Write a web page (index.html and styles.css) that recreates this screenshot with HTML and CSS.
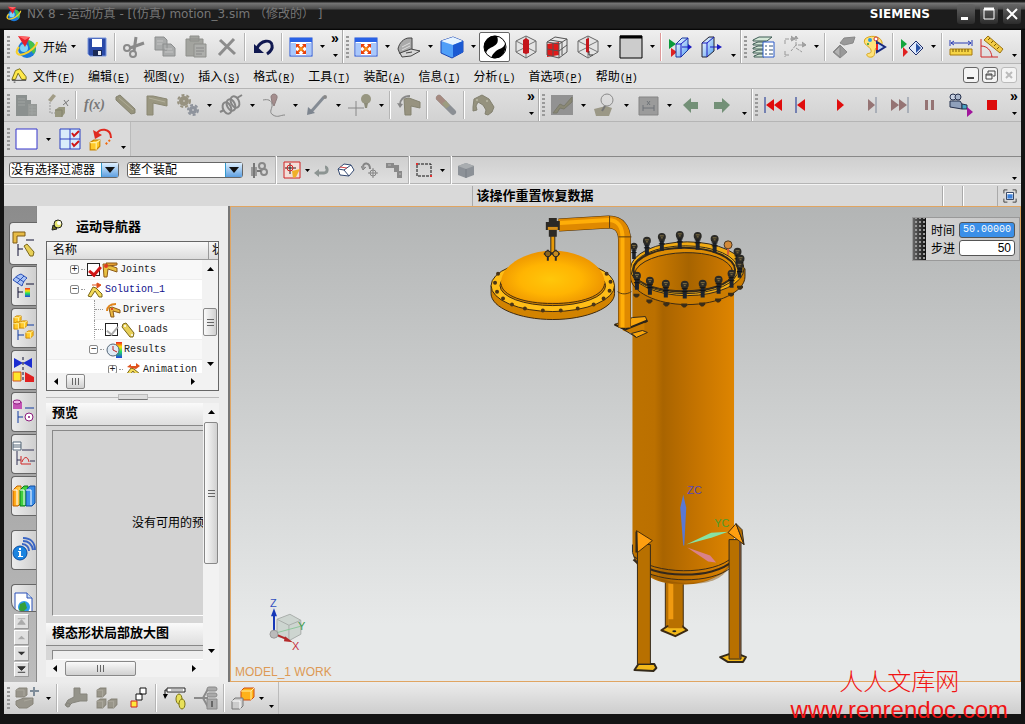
FILE: index.html
```html
<!DOCTYPE html>
<html lang="zh-CN">
<head>
    <meta charset="UTF-8">
    <meta name="viewport" content="width=device-width, initial-scale=1.0">
    <title>NX 8 - 运动仿真</title>
    <link rel="stylesheet" href="styles.css">
</head>
<body>
    <!-- Shared icon shapes -->
    <svg class="defs" width="0" height="0">
        <defs>
            <linearGradient id="pageBlue" x1="0" y1="0" x2="1" y2="1"><stop offset="0" stop-color="#fff"/><stop offset="1" stop-color="#4f9bf0"/></linearGradient>
            <linearGradient id="body" x1="0" x2="1" y1="0" y2="0"><stop offset="0" stop-color="#bd7200"/><stop offset=".22" stop-color="#bb7000"/><stop offset=".3" stop-color="#a96400"/><stop offset=".6" stop-color="#c27200"/><stop offset="1" stop-color="#de8500"/></linearGradient>
            <linearGradient id="inner" x1="0" x2="1" y1="0" y2="0"><stop offset="0" stop-color="#df8700"/><stop offset=".55" stop-color="#a76400"/><stop offset="1" stop-color="#d17b00"/></linearGradient>
            <radialGradient id="dome" cx=".48" cy=".55" r=".6"><stop offset="0" stop-color="#ffc70a"/><stop offset=".5" stop-color="#ffb402"/><stop offset="1" stop-color="#e88c00"/></radialGradient>
            <linearGradient id="rainbow" x1="0" y1="0" x2="0" y2="1"><stop offset="0" stop-color="#e22"/><stop offset=".3" stop-color="#fd0"/><stop offset=".6" stop-color="#2d6"/><stop offset="1" stop-color="#24d"/></linearGradient>
            <linearGradient id="book1" x1="0" x2="1"><stop offset="0" stop-color="#f90"/><stop offset="1" stop-color="#fd6"/></linearGradient>
        </defs>
        <symbol id="nx" viewBox="0 0 24 24">
            <circle cx="12" cy="14" r="9" fill="#1b79d8"/><path d="M13 5a9 9 0 0 1 6 14c-3-2-5-7-6-14z" fill="#45c24b"/><circle cx="9" cy="13" r="4" fill="#7fd4f7"/>
            <path d="M4 12c-5 6-1 9 5 7s13-8 13-12" fill="none" stroke="#f5cf2c" stroke-width="2"/>
            <path d="M3 1l12 1-5 10z" fill="#e5202c"/><path d="M3 1l12 1-5 3z" fill="#f66"/>
        </symbol>
        <symbol id="fit" viewBox="0 0 24 24">
            <rect x="1" y="3" width="22" height="18" fill="#fff" stroke="#1d50d8"/><rect x="1" y="3" width="22" height="4" fill="#2a62e6"/><path d="M2 8h5v12H2zM17 8h5v12h-5z" fill="#a9c8fb"/>
            <path d="M8 10l8 8M16 10l-8 8" stroke="#ee5a0c" stroke-width="2"/><path d="M7 9h4l-4 4zM17 9h-4l4 4zM7 19h4l-4-4zM17 19h-4l4-4z" fill="#e83c0c"/><circle cx="12" cy="14" r="2" fill="#f7931e"/>
        </symbol>
        <symbol id="wirecube" viewBox="0 0 24 24">
            <path d="M12 1l10 5v11l-10 6-10-6V6z" fill="#e4e4e4" stroke="#666"/><path d="M2 6l10 5 10-5M12 11v12M12 1v10M2 17l10-5 10 5" fill="none" stroke="#777"/>
        </symbol>
        <symbol id="ogcube" viewBox="0 0 10 10"><path d="M1 3l3-2h5v5l-3 3H1z" fill="#ffc928" stroke="#c98500"/><path d="M1 3h5v6M6 3l3-2" fill="none" stroke="#fff0a0"/></symbol>
        <symbol id="graycube" viewBox="0 0 10 10"><path d="M1 3l3-2h5v5l-3 3H1z" fill="#99968a" stroke="#88857a"/><path d="M1 3h5v6" fill="none" stroke="#aaa79c"/></symbol>
        <symbol id="link" viewBox="0 0 16 16"><path d="M3 2l3-1 8 10-1 4h-3L2 5z" fill="#e7cf57" stroke="#7a671b"/><circle cx="5" cy="4" r="1" fill="#fff"/><circle cx="12" cy="13" r="1" fill="#fff"/></symbol>
        <symbol id="joint" viewBox="0 0 16 16"><path d="M1 2h3l11 4v4L6 7l-1 8H2z" fill="#e9c040" stroke="#8d5a18"/><path d="M4 1h11v2L6 4z" fill="#e9a030" stroke="#8d5a18"/><circle cx="4" cy="4" r="2" fill="#e13a1f"/></symbol>
        <symbol id="arrowdown" viewBox="0 0 5 3"><path d="M0 0h5L2.500 3z"/></symbol>
        <symbol id="bolt" viewBox="0 0 10 20"><path d="M3 9h4v10H3z" fill="#1d232c"/><circle cx="5" cy="5" r="4" fill="#2b2a26"/><path d="M3 4h4M4 6h2" stroke="#8a7746"/><path d="M2 9h6M2 12h6" stroke="#111"/></symbol>
        <symbol id="nut" viewBox="0 0 8 6"><path d="M1 1h6v2l-2 2H3L1 3z" fill="#3a2d18"/></symbol>
    </svg>

    <div class="window">
        <header class="titlebar">
            <svg class="logo"><use href="#nx"/></svg>
            <h1>NX 8 - 运动仿真 - [(仿真) motion_3.sim （修改的） ]</h1>
            <span class="brand">SIEMENS</span>
            <button class="win-btn" aria-label="最小化"><svg viewBox="0 0 18 20"><path d="M4 13h7v3H4z" fill="#fff"/></svg></button>
            <button class="win-btn" aria-label="最大化"><svg viewBox="0 0 18 20"><path d="M4 5h10v10H4z" fill="none" stroke="#fff"/><path d="M4 5h10" stroke="#fff" stroke-width="3"/></svg></button>
            <button class="win-btn" aria-label="关闭"><svg viewBox="0 0 18 20"><path d="M4 5l10 10M14 5L4 15" stroke="#fff" stroke-width="2"/></svg></button>
        </header>

        <!-- Standard / view toolbars -->
        <div class="bar bar-main">
            <div class="group">
                <i class="grip"></i>
                <button class="start"><svg><use href="#nx"/></svg>开始<svg class="tri"><use href="#arrowdown"/></svg></button>
                <button class="tool" aria-label="保存"><svg viewBox="0 0 24 24"><path d="M3 3h18v18H5l-2-2z" fill="#2a4aa8" stroke="#7a96dc"/><path d="M7 4h10v8H7z" fill="#fff"/><path d="M8 15h9v6H8z" fill="#1b2a55"/><path d="M13 16h3v4h-3z" fill="#e8ecf4"/></svg></button>
                <i class="sep"></i>
                <button class="tool" aria-label="剪切"><svg viewBox="0 0 24 24" fill="none" stroke="#8a8a8a" stroke-width="2"><circle cx="5" cy="13" r="3"/><circle cx="11" cy="19" r="3"/><path d="M8 13l14-5M12 16l2-14" stroke-width="3"/></svg></button>
                <button class="tool" aria-label="复制"><svg viewBox="0 0 24 24" fill="#a9abab" stroke="#8c8e8e"><path d="M2 2h9l3 3v10H2zM10 9h8l4 4v8H10z"/><path d="M4 6h6M4 9h5M12 14h7M12 17h8" stroke="#c4c4c4"/></svg></button>
                <button class="tool" aria-label="粘贴"><svg viewBox="0 0 24 24" fill="#a3a49f" stroke="#8e8f8b"><path d="M2 4h17v17H2zM6 1h9v5H6z"/><path d="M10 9h12v13H10z" fill="#adaeab"/><path d="M12 13h8M12 16h8M12 19h6" stroke="#888"/></svg></button>
                <button class="tool" aria-label="删除"><svg viewBox="0 0 24 24"><path d="M5 5l15 14M19 4L4 20" stroke="#8c8c8c" stroke-width="3"/></svg></button>
                <i class="sep"></i>
                <button class="tool" aria-label="撤消"><svg viewBox="0 0 24 24"><path d="M5 13C9 5 19 4 20 10c1 4-2 7-5 9" fill="none" stroke="#101850" stroke-width="3"/><path d="M2 9v9h10z" fill="#101850"/></svg></button>
                <i class="sep"></i>
                <button class="tool" aria-label="适合窗口"><svg><use href="#fit"/></svg></button>
                <button class="drop" aria-label="更多"><svg class="tri"><use href="#arrowdown"/></svg></button>
                <button class="more" aria-label="工具条选项"><b>»</b><svg class="tri"><use href="#arrowdown"/></svg></button>
            </div>
            <div class="group">
                <i class="grip"></i>
                <button class="tool" aria-label="适合"><svg><use href="#fit"/></svg></button>
                <button class="drop" aria-label="更多"><svg class="tri"><use href="#arrowdown"/></svg></button>
                <button class="tool" aria-label="视图定向"><svg viewBox="0 0 24 24" stroke="#444"><path d="M1 14C2 8 7 3 12 3h3v12L3 19z" fill="#aaa"/><path d="M5 12l8-4M5 15l8-4" stroke="#ddd"/><path d="M3 18l11-4 9 2-9 5-9 1z" fill="#d6d6d6"/><path d="M9 18l6-1" /></svg></button>
                <button class="drop" aria-label="更多"><svg class="tri"><use href="#arrowdown"/></svg></button>
                <button class="tool" aria-label="着色"><svg viewBox="0 0 24 24"><path d="M1 6l12-4 10 4v11l-11 6-11-5z" fill="#4f9ff8" stroke="#1c46b4"/><path d="M1 6l12-4 10 4-10 4z" fill="#e6f4ff"/><path d="M13 10l10-4v11l-10 5z" fill="#1b5ad2"/></svg></button>
                <button class="drop" aria-label="更多"><svg class="tri"><use href="#arrowdown"/></svg></button>
                <button class="tool pressed" aria-label="背景"><svg viewBox="0 0 24 24"><circle cx="12" cy="12" r="11" fill="#fff" stroke="#000"/><path d="M14 1A11 11 0 0 0 3 18c2-5 5-5 8-7s5-4 3-10zM22 9c-2 5-5 4-9 7-3 3-5 5-4 7 8 2 15-5 13-14z" fill="#000"/></svg></button>
                <button class="tool" aria-label="剖切"><svg viewBox="0 0 24 24"><use href="#wirecube"/><path d="M9 5l3-2 3 2v13l-3 1-3-1z" fill="#c4161c"/></svg></button>
                <button class="tool" aria-label="剖切平面"><svg viewBox="0 0 24 24"><path d="M2 9l12-2v13l-12 2z" fill="#e01a1a"/><path d="M2 7l8-5 12 2v13l-8 6-12-3zM2 7l12 2 8-5M14 9v14M8 8v13M5 5l12 2v13M2 14l12 2 8-6" fill="none" stroke="#555"/></svg></button>
                <button class="tool" aria-label="编辑截面"><svg viewBox="0 0 24 24"><use href="#wirecube"/><path d="M10 4l3-1v15l-3-1z" fill="#c4161c"/><path d="M13 16v4h4" stroke="#333" fill="none"/></svg></button>
                <button class="drop" aria-label="更多"><svg class="tri"><use href="#arrowdown"/></svg></button>
                <button class="tool" aria-label="颜色"><svg viewBox="0 0 24 24"><path d="M1 1h22v22H1z" fill="#ccc" stroke="#000"/><path d="M1 2h22" stroke="#000" stroke-width="3"/></svg></button>
                <button class="drop" aria-label="更多"><svg class="tri"><use href="#arrowdown"/></svg></button>
                <i class="sep red"></i>
                <button class="tool" aria-label="显示"><svg viewBox="0 0 24 24"><path d="M1 4l7 5-7 5z" fill="#0a9a3a"/><path d="M3 13l6 4-6 5z" fill="#d22"/><path d="M8 9l6-6h6v12l-7 7H8z" fill="url(#pageBlue)" stroke="#1a3a9c"/><path d="M8 9h5v13M13 9l7-6M14 12h8" stroke="#1a1ac0" fill="none"/><path d="M20 9l4 3-4 3z" fill="#1a1ac0"/></svg></button>
                <button class="tool" aria-label="隐藏"><svg viewBox="0 0 24 24"><path d="M3 8l7-6h5v14l-7 6H3z" fill="url(#pageBlue)" stroke="#223"/><path d="M3 8h5v14M8 8l7-6M11 12h10" stroke="#1a1ac0" fill="none"/><path d="M18 9l5 3-5 3z" fill="#1a1ac0"/></svg></button>
                <button class="more" aria-label="工具条选项"><svg class="tri"><use href="#arrowdown"/></svg></button>
            </div>
            <div class="group">
                <i class="grip"></i>
                <button class="tool" aria-label="图层设置"><svg viewBox="0 0 24 24"><path d="M1 5l6-3h13l-5 4H1zM1 9l5-2h8v3H1zM1 13l5-2h8v3H1zM1 17l5-2h8v3H1zM2 21l5-2h5v3H2z" fill="#d5e8d8" stroke="#3c5a52"/><path d="M11 7h11v15H11z" fill="#fff" stroke="#2a5ac8"/><path d="M13 11h2m2 0h4m-8 4h2m2 0h4m-8 4h2m2 0h4" stroke="#357"/></svg></button>
                <button class="tool" aria-label="坐标系"><svg viewBox="0 0 24 24" fill="none" stroke="#999"><path d="M13 2v8h9M13 10l-5 6M2 9V4h7M13 13l6 4M2 16v6M2 20h5" stroke-dasharray="4 1" stroke-width="1"/><path d="M8 1l4 3-4 2M19 7l4 3-4 2M11 4l2-3 2 3" fill="#a2a2a2"/></svg></button>
                <button class="drop" aria-label="更多"><svg class="tri"><use href="#arrowdown"/></svg></button>
                <i class="sep"></i>
                <button class="tool" aria-label="移动对象"><svg viewBox="0 0 24 24" fill="#999" stroke="#888"><path d="M1 17l7-7 7 7-7 6zM8 8l4-5 11-1-2 6-9 2z"/><path d="M8 11v11l-6-5z" fill="#b2b2b2"/></svg></button>
                <button class="tool" aria-label="对象显示"><svg viewBox="0 0 24 24"><path d="M2 4c4-4 15-4 17 3 1 4-4 4-6 6s0 8-4 9-6-2-5-3 5 0 4-4-9-5-6-11z" fill="#ffe27a" stroke="#d8a61a"/><circle cx="7" cy="5" r="2" fill="#2b9be8"/><circle cx="13" cy="4" r="2" fill="#fff" stroke="#c33"/><circle cx="5" cy="9" r="1" fill="#2a9a3a"/><path d="M14 7l8 5-8 5z" fill="#bcd7ff" stroke="#1a2a7c" stroke-width="2"/><path d="M14 9v6" stroke="#e22" stroke-width="2"/></svg></button>
                <i class="sep"></i>
                <button class="tool" aria-label="显示和隐藏"><svg viewBox="0 0 24 24"><path d="M1 4l6 5-6 5z" fill="#12a63c"/><path d="M3 12l5 5-5 5z" fill="#e02020"/><path d="M9 13l7-7 7 7-7 7z" fill="#dfe9fb" stroke="#1c2c68"/><path d="M16 8v10l5-5z" fill="#2b55a8"/></svg></button>
                <button class="drop" aria-label="更多"><svg class="tri"><use href="#arrowdown"/></svg></button>
                <i class="sep"></i>
                <button class="tool" aria-label="测量距离"><svg viewBox="0 0 24 24"><path d="M1 5v6M23 5v6M2 8h20M5 6L2 8l3 2M19 6l3 2-3 2" stroke="#2a3cb4" fill="none"/><path d="M1 14h22v6H1z" fill="#f6d445" stroke="#a87b0e"/><path d="M4 14v3m3-3v3m3-3v3m3-3v3m3-3v3m3-3v3" stroke="#7a5a00"/></svg></button>
                <button class="tool" aria-label="测量角度"><svg viewBox="0 0 24 24"><path d="M1 4v18h17M1 11c6 0 10 4 11 11" fill="none" stroke="#d02626"/><path d="M8 1l15 13-3 4L4 5z" fill="#f2cc48" stroke="#9c7311"/><path d="M8 5l2-2m1 5l2-2m1 5l2-2m1 5l2-2" stroke="#7a5a00"/></svg></button>
                <button class="more" aria-label="工具条选项"><svg class="tri"><use href="#arrowdown"/></svg></button>
            </div>
        </div>

        <nav class="bar menubar">
            <i class="grip"></i>
            <svg class="menu-icon" viewBox="0 0 18 18"><path d="M1 14L5 4l5-2 7 9v3h-5L8 7l-3 7z" fill="#ffe94a" stroke="#6e6410"/><path d="M1 15h16M3 17h2" stroke="#333"/></svg>
            <button>文件<kbd>(<u>F</u>)</kbd></button>
            <button>编辑<kbd>(<u>E</u>)</kbd></button>
            <button>视图<kbd>(<u>V</u>)</kbd></button>
            <button>插入<kbd>(<u>S</u>)</kbd></button>
            <button>格式<kbd>(<u>R</u>)</kbd></button>
            <button>工具<kbd>(<u>T</u>)</kbd></button>
            <button>装配<kbd>(<u>A</u>)</kbd></button>
            <button>信息<kbd>(<u>I</u>)</kbd></button>
            <button>分析<kbd>(<u>L</u>)</kbd></button>
            <button>首选项<kbd>(<u>P</u>)</kbd></button>
            <button>帮助<kbd>(<u>H</u>)</kbd></button>
            <div class="mdi">
                <button aria-label="最小化"><svg viewBox="0 0 14 14"><path d="M3 10h7" stroke="#444" stroke-width="2"/></svg></button>
                <button aria-label="还原"><svg viewBox="0 0 14 14" fill="none" stroke="#444"><path d="M5 5V3h7v5h-2M3 6h6v5H3zM3 7h6"/></svg></button>
                <button class="off" aria-label="关闭"><svg viewBox="0 0 14 14"><path d="M4 4l6 6M10 4l-6 6" stroke="#bbb" stroke-width="2"/></svg></button>
            </div>
        </nav>

        <!-- Motion toolbars -->
        <div class="bar bar-motion">
            <div class="group grow">
                <i class="grip"></i>
                <button class="tool" aria-label="环境"><svg viewBox="0 0 24 24"><path d="M1 2h11v5h4v4h6v12H1z" fill="#8b908f"/><path d="M13 11h9v12h-9z" fill="#979a98"/><path d="M3 6h7m-7 3h7m-7 3h7m4 2h7m-7 3h7m-7 3h7M17 12v10" stroke="#a0a4a2"/></svg></button>
                <button class="tool" aria-label="动画体"><svg viewBox="0 0 24 24"><path d="M2 7l5-6 3 2-5 6z" fill="#a19c86"/><path d="M4 9v11h5" stroke="#999" fill="none" stroke-dasharray="2 1"/><path d="M9 17l4-3h6v6l-3 4H9z" fill="#98977f"/><path d="M9 17h7v7" stroke="#83826c" fill="none"/><path d="M17 12l6-5m-5 0l4 6" stroke="#777" fill="none"/></svg></button>
                <i class="sep"></i>
                <button class="tool fx">f(x)</button>
                <button class="tool" aria-label="连杆"><svg viewBox="0 0 24 24"><path d="M2 4l4-2 15 14v4l-4 1L2 7z" fill="#97947d" stroke="#858371"/><path d="M5 5l14 12" stroke="#aeab97"/></svg></button>
                <button class="tool" aria-label="运动副"><svg viewBox="0 0 24 24"><path d="M2 3h6l14 3v7L8 10v12H2z" fill="#9a9781" stroke="#8a8773"/><path d="M4 5l16 4" stroke="#b4b19d"/></svg></button>
                <button class="tool" aria-label="齿轮"><svg viewBox="0 0 24 24"><circle cx="8" cy="8" r="5" fill="#979280"/><circle cx="8" cy="8" r="6" fill="none" stroke="#979280" stroke-width="2" stroke-dasharray="3 2"/><circle cx="17" cy="17" r="4" fill="#8e939c"/><circle cx="17" cy="17" r="5" fill="none" stroke="#8e939c" stroke-width="2" stroke-dasharray="3 2"/><circle cx="8" cy="8" r="1" fill="#c0bdb3"/><circle cx="17" cy="17" r="1" fill="#c0c2c6"/></svg></button>
                <button class="drop" aria-label="更多"><svg class="tri"><use href="#arrowdown"/></svg></button>
                <button class="tool" aria-label="弹簧"><svg viewBox="0 0 24 24" fill="none" stroke="#858585" stroke-width="2"><path d="M1 19l4-2M18 5l5-3"/><ellipse cx="8" cy="15" rx="4" ry="6" transform="rotate(-25 8 15)"/><ellipse cx="12" cy="12" rx="4" ry="6" transform="rotate(-25 12 12)"/><ellipse cx="16" cy="9" rx="4" ry="6" transform="rotate(-25 16 9)"/></svg></button>
                <button class="drop" aria-label="更多"><svg class="tri"><use href="#arrowdown"/></svg></button>
                <button class="tool" aria-label="点在线上"><svg viewBox="0 0 24 24"><path d="M1 7c5-1 8 0 9 4s-4 8 1 11 7 0 12 0" fill="none" stroke="#888" stroke-width="1"/><path d="M9 4c0-4 7-4 6 1l-3 8-2-4z" fill="#a48d8d" stroke="#8d7c7c"/></svg></button>
                <button class="drop" aria-label="更多"><svg class="tri"><use href="#arrowdown"/></svg></button>
                <button class="tool" aria-label="标量力"><svg viewBox="0 0 24 24"><path d="M5 20L19 4" stroke="#848b94" stroke-width="3"/><circle cx="20" cy="4" r="2" fill="#888"/><path d="M3 14l-1 8 8-2z" fill="#7d858f"/></svg></button>
                <button class="drop" aria-label="更多"><svg class="tri"><use href="#arrowdown"/></svg></button>
                <button class="tool" aria-label="标记"><svg viewBox="0 0 24 24"><path d="M8 8v15M0 15h16" stroke="#888"/><circle cx="18" cy="6" r="5" fill="#979681"/><path d="M16 10h4l-1 5h-2z" fill="#8c8b78"/></svg></button>
                <button class="drop" aria-label="更多"><svg class="tri"><use href="#arrowdown"/></svg></button>
                <i class="sep"></i>
                <button class="tool" aria-label="驱动"><svg viewBox="0 0 24 24"><path d="M7 6l5-1 11 4v6l-9-2v9H8z" fill="#979380" stroke="#858371"/><path d="M3 12c0-5 3-9 10-9" fill="none" stroke="#888" stroke-width="2"/><path d="M0 10l3 5 3-4z" fill="#888"/></svg></button>
                <i class="sep"></i>
                <button class="tool" aria-label="柔性连接"><svg viewBox="0 0 24 24"><path d="M5 5l14 14" stroke="#8b8f94" stroke-width="6" stroke-linecap="round"/><path d="M5 5l5 5" stroke="#a58a80" stroke-width="6" stroke-linecap="round"/><path d="M10 9l4 5" stroke="#9d9c80" stroke-width="5"/></svg></button>
                <i class="sep"></i>
                <button class="tool" aria-label="机构"><svg viewBox="0 0 24 24"><path d="M2 14L3 6l8-4 7 4 5 8-2 5-4 3-3-1 1-4-3-5-5-3-2 4 1 4-4 1z" fill="#95927e" stroke="#838170"/><circle cx="6" cy="7" r="1" fill="#bbb8a6"/><circle cx="16" cy="8" r="1" fill="#bbb8a6"/></svg></button>
                <button class="more end" aria-label="工具条选项"><b>»</b><svg class="tri"><use href="#arrowdown"/></svg></button>
            </div>
            <div class="group">
                <i class="grip"></i>
                <button class="tool" aria-label="解算"><svg viewBox="0 0 24 24"><path d="M1 2h22v20H1z" fill="#929292"/><path d="M3 20l7-9 4 2 8-9v5l-8 7-4-1-3 5z" fill="#8a8874" stroke="#7a7a6c"/></svg></button>
                <button class="drop" aria-label="更多"><svg class="tri"><use href="#arrowdown"/></svg></button>
                <button class="tool" aria-label="干涉"><svg viewBox="0 0 24 24"><path d="M1 16l12-3 6 2-3 8H3z" fill="#9b9886"/><circle cx="14" cy="7" r="6" fill="none" stroke="#8a8a8a" stroke-width="1"/><path d="M12 13l-3 5" stroke="#777" stroke-width="2"/></svg></button>
                <button class="drop" aria-label="更多"><svg class="tri"><use href="#arrowdown"/></svg></button>
                <button class="tool" aria-label="测量"><svg viewBox="0 0 24 24"><path d="M3 4h19v18H3z" fill="#9b9b9b" stroke="#858585"/><path d="M7 12v6M18 12v6M7 15h11M11 8l3 4m0-4l-3 4" stroke="#6f7378" fill="none"/></svg></button>
                <button class="drop" aria-label="更多"><svg class="tri"><use href="#arrowdown"/></svg></button>
                <button class="tool" aria-label="上一步"><svg viewBox="0 0 24 24"><path d="M4 12l8-7v4h7v7h-7v4z" fill="#739077"/></svg></button>
                <button class="tool" aria-label="下一步"><svg viewBox="0 0 24 24"><path d="M20 12l-8-7v4H4v7h8v4z" fill="#739077"/></svg></button>
                <button class="more" aria-label="工具条选项"><svg class="tri"><use href="#arrowdown"/></svg></button>
            </div>
            <div class="group">
                <i class="grip"></i>
                <button class="tool" aria-label="首步"><svg viewBox="0 0 24 24"><path d="M2 4v16" stroke="#112a8c"/><path d="M11 6v12l-8-6zM19 6v12l-8-6z" fill="#e00d0d"/></svg></button>
                <button class="tool" aria-label="后退"><svg viewBox="0 0 24 24"><path d="M2 4v16" stroke="#112a8c"/><path d="M11 6v12l-8-6z" fill="#e00d0d"/></svg></button>
                <button class="tool" aria-label="播放"><svg viewBox="0 0 24 24"><path d="M12 6l7 6-7 6z" fill="#e00d0d"/></svg></button>
                <button class="tool" aria-label="前进"><svg viewBox="0 0 24 24"><path d="M12 6l7 6-7 6z" fill="#957474"/><path d="M20 4v16" stroke="#7d8799"/></svg></button>
                <button class="tool" aria-label="末步"><svg viewBox="0 0 24 24"><path d="M4 6l8 6-8 6zM12 6l8 6-8 6z" fill="#957474"/><path d="M21 4v16" stroke="#7d8799"/></svg></button>
                <button class="tool" aria-label="暂停"><svg viewBox="0 0 24 24"><path d="M7 7h3v10H7zM13 7h3v10h-3z" fill="#957474"/></svg></button>
                <button class="tool" aria-label="导出影片"><svg viewBox="0 0 24 24"><path d="M1 8h10l2 3v5L1 14z" fill="#8fa0bb" stroke="#25304c"/><circle cx="4" cy="4" r="3" fill="#c9d2e3" stroke="#25304c"/><circle cx="9" cy="4" r="3" fill="#a9b6cc" stroke="#25304c"/><path d="M13 11l5 1v4h-5z" fill="#47a3c4" stroke="#25304c"/><path d="M18 14l6 5-6 5z" fill="#a0169c"/></svg></button>
                <button class="tool" aria-label="停止"><svg viewBox="0 0 24 24"><path d="M7 7h10v10H7z" fill="#dc0a0a"/></svg></button>
                <button class="more" aria-label="工具条选项"><b>»</b><svg class="tri"><use href="#arrowdown"/></svg></button>
            </div>
        </div>

        <div class="bar bar-extra">
            <div class="group edge">
                <i class="grip"></i>
                <button class="tool" aria-label="视图"><svg viewBox="0 0 24 24"><path d="M1 2h21v20H1z" fill="#fff" stroke="#3434cc"/></svg></button>
                <button class="drop" aria-label="更多"><svg class="tri"><use href="#arrowdown"/></svg></button>
                <button class="tool" aria-label="视图布局"><svg viewBox="0 0 24 24"><path d="M2 2h20v20H2zM12 2v20M2 12h20" fill="#d9ecfb" stroke="#2a3fc0"/><path d="M14 6l2 3 5-5M14 16l2 3 5-5" fill="none" stroke="#d01616" stroke-width="2"/></svg></button>
                <button class="tool" aria-label="重置"><svg viewBox="0 0 24 24"><path d="M7 8c3-8 15-7 15 3" fill="none" stroke="#e02a20" stroke-width="2"/><path d="M4 3l2 9 7-4z" fill="#e02a20"/><path d="M21 13l-5 5" stroke="#f06a10" stroke-width="2" stroke-dasharray="2 2"/><svg x="0" y="12" width="12" height="12"><use href="#ogcube"/></svg></svg></button>
                <button class="more" aria-label="工具条选项"><svg class="tri"><use href="#arrowdown"/></svg></button>
            </div>
        </div>

        <!-- Selection bar -->
        <div class="bar bar-select">
            <label class="combo filter"><select aria-label="选择过滤器"><option>没有选择过滤器</option></select></label>
            <label class="combo scope"><select aria-label="选择范围"><option>整个装配</option></select></label>
            <button class="tool small" aria-label="链接"><svg viewBox="0 0 18 18"><path d="M1 6h6v9H1z" fill="#999"/><circle cx="12" cy="5" r="3" fill="none" stroke="#888" stroke-width="2"/><circle cx="14" cy="11" r="3" fill="none" stroke="#888" stroke-width="2"/><path d="M4 2v15M7 10h4" stroke="#777" stroke-width="2"/></svg></button>
            <i class="sep wide"></i>
            <button class="tool small" aria-label="捕捉"><svg viewBox="0 0 18 18"><path d="M1 1h16v16H1z" fill="#f3ded8" stroke="#d02222"/><path d="M7 2v11M2 7h11" stroke="#222"/><circle cx="7" cy="7" r="3" fill="none" stroke="#d22"/><path d="M9 10l8-2-4 8-3 1z" fill="#efb02a"/></svg></button>
            <button class="drop tight" aria-label="更多"><svg class="tri"><use href="#arrowdown"/></svg></button>
            <button class="tool small" aria-label="返回"><svg viewBox="0 0 18 18"><path d="M4 12h7c4 0 4-6 1-6" fill="none" stroke="#8c9492" stroke-width="3"/><path d="M6 8v8l-5-4z" fill="#8c9492"/></svg></button>
            <button class="tool small" aria-label="面"><svg viewBox="0 0 18 18"><path d="M1 8l6-5 7 1 3 5-5 6-9-1z" fill="#fff" stroke="#354a72"/><path d="M7 9l7-5M7 9l5 6M1 8l6 1" stroke="#354a72"/><path d="M3 6l7 1" stroke="#d44"/></svg></button>
            <button class="tool small" aria-label="点"><svg viewBox="0 0 18 18" fill="none" stroke="#858585"><path d="M2 6c0-5 7-5 7 2" stroke-width="2"/><path d="M0 5l2 4 3-3" fill="#999"/><circle cx="12" cy="12" r="3"/><path d="M12 7v10M7 12h10"/></svg></button>
            <button class="tool small" aria-label="路径"><svg viewBox="0 0 18 18" fill="#8a8a8a"><path d="M1 2h8v2h5v6h3v7h-5v-6H9V7H1z"/><path d="M3 4h3M14 13h2" stroke="#bbb"/></svg></button>
            <i class="sep"></i>
            <button class="tool small" aria-label="矩形选择"><svg viewBox="0 0 18 18"><path d="M2 3h14v12H2z" fill="none" stroke="#111" stroke-dasharray="3 1"/><path d="M1 2h2v2H1zM15 14h2v2h-2z" fill="#e03030"/></svg></button>
            <button class="drop" aria-label="更多"><svg class="tri"><use href="#arrowdown"/></svg></button>
            <i class="sep"></i>
            <button class="tool small" aria-label="体"><svg viewBox="0 0 18 18"><path d="M1 5l8-3 8 3v9l-8 3-8-3z" fill="#8c9197"/><path d="M1 5l8 3 8-3-8-3z" fill="#a9adb0"/><path d="M9 8v9" stroke="#787e85"/></svg></button>
            <button class="more end" aria-label="工具条选项"><svg class="tri"><use href="#arrowdown"/></svg></button>
        </div>

        <div class="statusbar">
            <span class="cue"></span>
            <strong>该操作重置恢复数据</strong>
            <span class="cell"></span>
            <span class="cell wide"></span>
            <button aria-label="全屏"><svg viewBox="0 0 16 16"><path d="M1 5V1h4M11 1h4v4M15 11v4h-4M5 15H1v-4" fill="none" stroke="#333"/><path d="M4 4h8v8H4z" fill="#fff" stroke="#235"/><path d="M5 6h6v5H5z" fill="#3f83dc"/></svg></button>
        </div>

        <main class="workspace">
            <!-- Resource bar -->
            <aside class="resource">
                <button class="tab active" aria-label="运动导航器"><svg viewBox="0 0 24 26"><path d="M1 1h12v4H5v7H1z" fill="#e7bb45" stroke="#7d5b16"/><path d="M14 9h8M6 13v12M6 18h5" stroke="#113" fill="none"/><path d="M12 15l3-2 7 8-1 4h-3z" fill="#e7cf57" stroke="#7a671b"/></svg></button>
                <button class="tab" aria-label="仿真导航器"><svg viewBox="0 0 24 26"><path d="M1 7c2-3 5-5 8-6l6 4c-2 2-4 4-5 8z" fill="#a9c3f5" stroke="#2a50b8"/><path d="M4 4l8 5M5 10l7-7" stroke="#2a50b8"/><path d="M14 11h8M6 14v11M6 19h5" stroke="#113"/><path d="M13 15h5v9h-5z" fill="url(#rainbow)"/></svg></button>
                <button class="tab" aria-label="装配导航器"><svg viewBox="0 0 24 26"><svg x="1" y="0" width="9" height="9"><use href="#ogcube"/></svg><svg x="1" y="6" width="9" height="9"><use href="#ogcube"/></svg><svg x="7" y="5" width="9" height="9"><use href="#ogcube"/></svg><path d="M15 10h7M6 15v10M6 20h6" stroke="#113aa0"/><svg x="13" y="15" width="9" height="9"><use href="#ogcube"/></svg></svg></button>
                <button class="tab" aria-label="约束导航器"><svg viewBox="0 0 24 26"><path d="M2 1l9 5-9 5zM20 1l-9 5 9 5z" fill="#1c2ed0"/><path d="M11 0v25" stroke="#113" stroke-dasharray="3 2"/><path d="M1 15h8v9H1z" fill="#ffe62c" stroke="#d05020"/><path d="M13 15l9 5v5h-9z" fill="#e02020"/></svg></button>
                <button class="tab" aria-label="部件导航器"><svg viewBox="0 0 24 26"><path d="M1 3h9v7H1z" fill="#c453b4"/><ellipse cx="5" cy="3" rx="4" ry="2" fill="#f1b5ea" stroke="#8c1c7c"/><path d="M13 9h9M6 12v12M6 18h5" stroke="#113aa0"/><circle cx="17" cy="18" r="4" fill="#fff" stroke="#8c1c7c"/><circle cx="17" cy="18" r="1" fill="#8c1c7c"/></svg></button>
                <button class="tab" aria-label="XY 函数"><svg viewBox="0 0 24 26"><path d="M1 1h8v8H1zM1 4h8M1 6h8" fill="#fff" stroke="#567"/><path d="M10 9h12M5 10v14M5 19h4M18 20h5" stroke="#335"/><path d="M9 15v8h10M10 21c2-6 6-6 7 0" fill="none" stroke="#d02626"/></svg></button>
                <button class="tab" aria-label="重用库"><svg viewBox="0 0 24 26"><path d="M1 7l4-4h4v17l-3 3H1z" fill="url(#book1)" stroke="#c06000"/><path d="M8 7l4-4h4v17l-3 3H8z" fill="#3fd03f" stroke="#0a7a1a"/><path d="M14 7l4-4h5v17l-3 3h-6z" fill="#3a8ee8" stroke="#134c9c"/><path d="M14 7h5v15M8 7h4v15M1 7h4v15" stroke="#fff" fill="none"/></svg></button>
                <button class="tab apart" aria-label="HD3D 工具"><svg viewBox="0 0 24 26"><path d="M10 7c5 0 7 4 7 7M11 4c6 0 9 4 10 9M11 1c8 0 12 5 12 12" fill="none" stroke="#3b66c4" stroke-width="2"/><circle cx="8" cy="16" r="7" fill="#1b84e0" stroke="#0b4ca0"/><path d="M6 14h3v5h2v1H6v-1h1v-4H6zM7 11h2v2H7z" fill="#fff"/></svg></button>
                <button class="tab apart cut" aria-label="浏览器"><svg viewBox="0 0 24 22"><path d="M3 4h12l5 5v16H3z" fill="#fff" stroke="#2a50b8"/><path d="M15 4v5h5" fill="#cde" stroke="#2a50b8"/><circle cx="12" cy="18" r="6" fill="#2b9be8"/><path d="M8 15l5-2 2 6-5 5-3-3z" fill="#35a03a"/></svg></button>
                <div class="tab-scroll">
                    <button aria-label="顶部"><svg viewBox="0 0 14 14"><path d="M3 4h8M7 5l4 5H3z" fill="#aaa" stroke="#aaa"/></svg></button>
                    <button aria-label="上"><svg viewBox="0 0 14 14"><path d="M7 5l4 4H3z" fill="#aaa"/></svg></button>
                    <button aria-label="下"><svg viewBox="0 0 14 14"><path d="M7 9l4-4H3z" fill="#333"/></svg></button>
                    <button aria-label="底部"><svg viewBox="0 0 14 14"><path d="M3 10h8M7 8l4-4H3z" fill="#333" stroke="#333"/></svg></button>
                </div>
            </aside>

            <section class="navigator">
                <h2><svg viewBox="0 0 12 12"><circle cx="7" cy="5" r="4" fill="#e5e36a" stroke="#222"/><path d="M2 6l4 4-5 1z" fill="#6b6b1c" stroke="#222"/><circle cx="8" cy="4" r="2" fill="#fff"/></svg>运动导航器</h2>
                <div class="tree">
                    <div class="tree-head"><span>名称</span><span class="next">状态</span></div>
                    <div class="tree-body">
                        <ul>
                            <li class="lv1 alt"><button class="exp" aria-label="展开">+</button><i class="stub"></i><input type="checkbox" class="on" aria-label="Joints" checked><svg><use href="#joint"/></svg>Joints</li>
                            <li class="lv1"><button class="exp" aria-label="折叠">−</button><i class="stub"></i><svg viewBox="0 0 16 16"><path d="M1 14l5-9 3 1 6 6v3h-3L8 9l-4 6z" fill="#f2da57" stroke="#7a671b"/><path d="M5 3h7M10 1l4 2-4 3z" fill="#e0521c" stroke="#e0521c"/></svg><a href="#">Solution_1</a></li>
                            <li class="lv2 alt"><i class="stub"></i><svg viewBox="0 0 16 16"><path d="M4 6l3-1 8 3v3l-7-2 1 6H6z" fill="#e9b640" stroke="#8d5a18"/><path d="M2 9c0-4 3-7 9-7" fill="none" stroke="#e0851c" stroke-width="2"/><circle cx="7" cy="7" r="1" fill="#d22"/></svg>Drivers</li>
                            <li class="lv2"><i class="stub"></i><input type="checkbox" class="dim" aria-label="Loads" checked><svg><use href="#link"/></svg>Loads</li>
                            <li class="lv2x alt"><button class="exp" aria-label="折叠">−</button><i class="stub"></i><svg viewBox="0 0 16 16"><path d="M10 0h6v16h-6z" fill="url(#rainbow)"/><circle cx="7" cy="8" r="6" fill="#dfeaf4" stroke="#567"/><path d="M7 4v4l4 2" stroke="#b22" fill="none"/></svg>Results</li>
                            <li class="lv3"><button class="exp" aria-label="展开">+</button><i class="stub"></i><svg viewBox="0 0 16 16"><path d="M1 13l5-7 3 1 6 5v3h-3L8 9l-4 5z" fill="#f2da57" stroke="#7a671b"/><path d="M2 5l4-3v2h5V1l4 3-4 3" fill="#e0521c"/></svg>Animation</li>
                        </ul>
                        <div class="vscroll"><svg viewBox="0 0 7 4"><path d="M0 4h7L3.500 0z"/></svg><i class="thumb"></i><svg viewBox="0 0 7 4"><path d="M0 0h7L3.500 4z"/></svg></div>
                    </div>
                    <div class="hscroll"><svg viewBox="0 0 4 7"><path d="M4 0v7L0 3.500z"/></svg><i class="thumb"></i><svg viewBox="0 0 4 7"><path d="M0 0v7l4-3.500z"/></svg></div>
                </div>
                <div class="splitter"><i></i></div>
                <div class="details">
                    <div class="panes">
                        <h3>预览</h3>
                        <div class="preview"><p>没有可用的预览</p></div>
                        <h3>模态形状局部放大图</h3>
                        <div class="preview mode"></div>
                    </div>
                    <div class="vscroll tall"><svg viewBox="0 0 7 4"><path d="M0 4h7L3.500 0z"/></svg><i class="thumb"></i><svg viewBox="0 0 7 4"><path d="M0 0h7L3.500 4z"/></svg></div>
                </div>
                <div class="hscroll long"><svg viewBox="0 0 4 7"><path d="M4 0v7L0 3.500z"/></svg><i class="thumb"></i><svg viewBox="0 0 4 7"><path d="M0 0v7l4-3.500z"/></svg></div>
            </section>

            <section class="canvas">
                <svg class="model" viewBox="230 206 790 476" preserveAspectRatio="xMidYMid meet">
                    <!-- rear leg -->
                    <path d="M665 580h18v50h-18z" fill="#b87000" stroke="#3d2a12"/><path d="M668 580h5v50h-5z" fill="#f09a10"/>
                    <path d="M661 631l6-4h15l5 4-12 6z" fill="#f2b81a" stroke="#3d2a12" stroke-width="2" stroke-linejoin="round"/><path d="M668 620h14v9h-14z" fill="#b87000"/><ellipse cx="674" cy="632" rx="2" ry="1" fill="#222"/>
                    <!-- vessel -->
                    <path d="M632 270v280c0 10 6 22 20 29 16 8 42 8 58 1 13-5 24-12 24-27V270z" fill="url(#body)"/>
                    <path d="M640 563c10 24 78 32 92-4-2 14-14 22-26 24-18 3-40 2-52-4-7-4-12-10-14-16z" fill="#8a5000" opacity=".45"/>
                    <path d="M634 557c18 18 80 20 99 0M637 568c22 16 74 17 94 0" fill="none" stroke="#3a2a17"/>
                    <path d="M633 560c18 19 80 21 100 1" fill="none" stroke="#33281c" stroke-width="2"/>
                    <path d="M632 545v8c2 6 4 9 7 13" stroke="#333" fill="none"/>
                    <!-- top flange -->
                    <path d="M630 268v8c0 15 26 28 57 28s58-13 58-28v-8z" fill="#cb7c00" stroke="#3d2a12"/>
                    <ellipse cx="687" cy="268" rx="57" ry="27" fill="#f0aa12" stroke="#33291a"/>
                    <ellipse cx="685" cy="269" rx="53" ry="24" fill="#f6b620" stroke="#33291a"/>
                    <ellipse cx="684" cy="269" rx="51" ry="22" fill="#dd8c04" stroke="#33291a" stroke-width="2"/>
                    <path d="M634 273c5-26 95-30 99-1-6 24-91 24-99 1z" fill="url(#inner)" stroke="#33291a" stroke-width="1"/>
                    <g>
                        <use href="#bolt" x="641" y="235" width="11" height="20"/><use href="#bolt" x="656" y="231" width="11" height="20"/><use href="#bolt" x="674" y="229" width="11" height="20"/><use href="#bolt" x="692" y="230" width="11" height="20"/><use href="#bolt" x="709" y="233" width="11" height="20"/><use href="#bolt" x="732" y="246" width="11" height="20"/><use href="#bolt" x="735" y="253" width="11" height="20"/><use href="#bolt" x="734" y="260" width="11" height="18"/><use href="#bolt" x="628" y="241" width="11" height="18"/>
                        <use href="#bolt" x="631" y="270" width="11" height="20"/><use href="#bolt" x="644" y="275" width="11" height="20"/><use href="#bolt" x="660" y="278" width="11" height="20"/><use href="#bolt" x="679" y="279" width="11" height="20"/><use href="#bolt" x="697" y="278" width="11" height="20"/><use href="#bolt" x="713" y="274" width="11" height="20"/><use href="#bolt" x="726" y="268" width="11" height="20"/>
                        <circle cx="728" cy="244" r="4" fill="#d38a39" stroke="#4a3520"/><path d="M728 248v6" stroke="#d65a3c" stroke-width="2"/>
                        <use href="#nut" x="632" y="292" width="8" height="6"/><use href="#nut" x="645" y="298" width="8" height="6"/><use href="#nut" x="662" y="301" width="8" height="6"/><use href="#nut" x="680" y="302" width="8" height="6"/><use href="#nut" x="698" y="301" width="8" height="6"/><use href="#nut" x="714" y="297" width="8" height="6"/><use href="#nut" x="727" y="291" width="8" height="6"/><use href="#nut" x="736" y="284" width="8" height="6"/>
                    </g>
                    <!-- davit arm -->
                    <path d="M632 317l13-1 2 5-22 9-11-6z" fill="#f7a40c" stroke="#33291a"/>
                    <path d="M622 330l22-8v8l-12 3z" fill="#cb7c00"/><path d="M614 324l11 5 22-9" fill="none" stroke="#2c2418" stroke-width="2"/>
                    <path d="M631 333l11-3 5 2-11 5z" fill="#f7a40c" stroke="#33291a"/><path d="M623 329l13 8" stroke="#33291a"/>
                    <path d="M558 224l50-3c11 0 16 7 16 18v88" fill="none" stroke="#4a3010" stroke-width="13"/>
                    <path d="M558 224l50-3c11 0 16 7 16 18v88" fill="none" stroke="#df8900" stroke-width="12"/>
                    <path d="M559 222l49-3c10 0 14 8 14 18v90" fill="none" stroke="#ffae08" stroke-width="4"/>
                    <path d="M609 215v12M618 236h13M617 291c4 3 9 3 14 0" fill="none" stroke="#5a3c10"/>
                    <!-- lid -->
                    <path d="M490 285v8c0 14 28 26 62 26s62-12 62-26v-8z" fill="#d28300" stroke="#3d2a12"/>
                    <ellipse cx="552" cy="285" rx="62" ry="26" fill="#ffbd17" stroke="#3d2a12"/>
                    <ellipse cx="552" cy="285" rx="53" ry="20" fill="#d78700" stroke="#3d2a12"/>
                    <path d="M500 282c0-17 24-32 52-32s52 15 52 32c0 13-23 20-52 20s-52-7-52-20z" fill="url(#dome)"/>
                    <path d="M500 283c1 12 23 20 52 20s51-8 52-20" fill="none" stroke="#4a3010" stroke-width="1"/>
                    <path d="M497 273h0M494 282h0M496 291h0M502 298h0M511 304h0M524 308h0M542 310h0M560 310h0M577 308h0M593 304h0M603 298h0M609 290h0M610 281h0M606 273h0" stroke="#4a3518" stroke-width="4" stroke-linecap="round"/>
                    <path d="M550 232h4v20h-4z" fill="#e79a08" stroke="#33291a"/>
                    <path d="M548 217h8v3h3v9h-3v7h-8v-7h-3v-8h3z" fill="#2c2a26"/><path d="M547 226h10v3h-10z" fill="#d89018"/>
                    <path d="M547 249v11M555 249v11M543 253h16" stroke="#2c2a26" stroke-width="2"/><circle cx="547" cy="253" r="3" fill="#8b6620" stroke="#222"/><circle cx="555" cy="253" r="3" fill="#c78b1e" stroke="#222"/>
                    <!-- front legs -->
                    <path d="M634 671l4-6h16l2 4-3 3z" fill="#f2b81a" stroke="#33291a" stroke-width="2" stroke-linejoin="round"/>
                    <path d="M637 545h13v120h-13z" fill="#b87000" stroke="#33291a" stroke-width="1"/>
                    <path d="M636 531l16 10-15 12z" fill="#ff9f10" stroke="#4a2d08" stroke-width="1"/><path d="M636 532v21" stroke="#33291a" stroke-width="2"/>
                    <path d="M720 658l9-3 12 1 5 2-3 5h-15z" fill="#f2b81a" stroke="#33291a" stroke-width="2" stroke-linejoin="round"/>
                    <path d="M729 540h12v120h-12z" fill="#b87000" stroke="#33291a" stroke-width="1"/><path d="M739 540h2v119h-2z" fill="#6a4a30"/>
                    <path d="M736 524l8 21-16-12z" fill="#ff9f10" stroke="#4a2d08" stroke-width="1"/><path d="M736 524l6 6 2 15z" fill="#b87000" stroke="#33291a"/>
                    <!-- work coordinate system -->
                    <path d="M683 495l3 13-2 38h-1l-3-38z" fill="#5a78d2"/><path d="M686 545l25-12 17-1-16 6z" fill="#86e3a4"/><path d="M687 548l23 8 6 7-8-1z" fill="#d9828a"/>
                    <text x="687" y="494" class="axis" fill="#5a45b4">ZC</text><text x="714" y="527" class="axis" fill="#4f9c28">YC</text>
                    <!-- view triad -->
                    <path d="M275 620l13-5 11 6v14l-11 6-13-4z" fill="#cdd5d0" stroke="#a9aeab"/><path d="M275 620l12 6 12-5M287 626v15" fill="none" stroke="#a9aeab"/>
                    <path d="M273 634l26-7" stroke="#8cc79a"/><path d="M272 634v-20" stroke="#1638b8" stroke-width="2"/><path d="M269 617l3-8 3 8z" fill="#1638b8"/>
                    <path d="M273 635l12 5" stroke="#b42a2a" stroke-width="2"/><path d="M283 637l8 6-9-1z" fill="#b42a2a"/><circle cx="272" cy="635" r="4" fill="#bbb" stroke="#999"/>
                    <text x="268" y="608" class="axis" fill="#3350c0">Z</text><text x="296" y="631" class="axis" fill="#3c9a4c">Y</text><text x="290" y="651" class="axis" fill="#c83040">X</text>
                </svg>
                <span class="model-name">MODEL_1 WORK</span>
                <form class="timer">
                    <i class="handle"></i>
                    <label for="time">时间</label><input id="time" class="hot" value="50.00000">
                    <label for="step">步进</label><input id="step" value="50">
                </form>
            </section>
        </main>

        <!-- Assembly toolbar -->
        <div class="bar bar-bottom">
            <div class="group edge">
                <i class="grip"></i>
                <button class="tool" aria-label="添加组件"><svg viewBox="0 0 24 24"><path d="M1 4l3-2h8v7l-3 2H1zM1 15l8-3h9v6l-6 4H4l-3-3z" fill="#97948a" stroke="#88857a"/><path d="M1 4h8v6M9 15l8-2" stroke="#aaa79c" fill="none"/><path d="M19 1v9M15 5h9" stroke="#7e8c99" stroke-width="2"/></svg></button>
                <button class="drop" aria-label="更多"><svg class="tri"><use href="#arrowdown"/></svg></button>
                <i class="sep"></i>
                <button class="tool" aria-label="移动组件"><svg viewBox="0 0 24 24" fill="#94938a" stroke="#86857d"><path d="M10 2h6v6h7v7h-7l-8 2-4 4-3-2 3-5 6-3z"/><circle cx="4" cy="19" r="2"/></svg></button>
                <button class="tool" aria-label="阵列组件"><svg viewBox="0 0 24 24"><svg x="1" y="1" width="11" height="11"><use href="#graycube"/></svg><svg x="1" y="12" width="11" height="11"><use href="#graycube"/></svg><svg x="12" y="12" width="11" height="11"><use href="#graycube"/></svg></svg></button>
                <button class="tool" aria-label="爆炸图"><svg viewBox="0 0 24 24"><path d="M14 2h6v6h-6zM10 8h6v6h-6z" fill="#fff" stroke="#111"/><path d="M5 15h6v6H5z" fill="#ffe93a" stroke="#d02222" stroke-width="1"/></svg></button>
                <i class="sep"></i>
                <button class="tool" aria-label="序列"><svg viewBox="0 0 24 24"><path d="M2 11V4h4" fill="none" stroke="#111"/><path d="M0 8h5l-3 5z"/><path d="M4 2h18v4H4z" fill="#fff" stroke="#222"/><path d="M8 4h12" stroke="#888"/><ellipse cx="16" cy="13" rx="3" ry="5" fill="#e8e05a" stroke="#7c7414"/><ellipse cx="19" cy="18" rx="3" ry="5" fill="#e8e05a" stroke="#7c7414"/></svg></button>
                <button class="tool" aria-label="关系浏览器"><svg viewBox="0 0 24 24" fill="#aaa" stroke="#8a8a8a"><path d="M0 12h9l5-9M9 12h5M9 12l5 9" fill="none" stroke-width="2"/><rect x="13" y="1" width="10" height="4" rx="2"/><rect x="13" y="7" width="10" height="4" rx="2"/><path d="M13 13h10v10H13z"/><path d="M18 15v6" stroke="#666" stroke-width="2"/></svg></button>
                <i class="sep"></i>
                <button class="tool" aria-label="替换引用集"><svg viewBox="0 0 24 24"><path d="M10 5l3-3h10v9l-3 3H10z" fill="#ffb21a" stroke="#d04a10"/><path d="M10 5h10v9M20 5l3-3" stroke="#fff0a0" fill="none"/><path d="M1 15l3-3h8v8l-3 3H1z" fill="#ccc" stroke="#777"/><path d="M1 15h8v8" fill="none" stroke="#fff"/></svg></button>
                <button class="drop tight" aria-label="更多"><svg class="tri"><use href="#arrowdown"/></svg></button>
                <button class="more" aria-label="工具条选项"><svg class="tri"><use href="#arrowdown"/></svg></button>
            </div>
        </div>

        <div class="watermark"><span>人人文库网</span><span class="site">www.renrendoc.com</span></div>
    </div>
</body>
</html>
```

FILE: styles.css
```css
* {
    box-sizing: border-box;
}
body {
    margin: 0;
    background: #111;
    font-family: "Liberation Sans", "Noto Sans CJK SC", sans-serif;
    font-size: 12px;
    color: #000;
}
button {
    font: inherit;
    color: inherit;
    padding: 0;
    border: 0;
    background: none;
}
.defs {
    position: absolute;
}
.window {
    position: relative;
    display: flex;
    flex-direction: column;
    height: 100vh;
    padding: 0 4px 10px;
    background: #141414;
    overflow: hidden;
}

/* Title bar */
.titlebar {
    display: flex;
    align-items: center;
    height: 30px;
    flex: none;
    margin: 0 -4px;
    padding: 0 4px 2px 6px;
    background: linear-gradient(#111 0, #222 2px, #777 3px, #4a4a4a 9px, #1c1c1c 10px, #1c1c1c 28px, #000 30px);
}
.logo {
    width: 16px;
    height: 18px;
}
.titlebar h1 {
    flex: 1;
    margin: 0 0 0 5px;
    font: 12px/16px "DejaVu Sans", "Noto Sans CJK SC", sans-serif;
    color: #777;
    white-space: nowrap;
}
.brand {
    margin-right: 22px;
    font: bold 12px/16px "DejaVu Sans", sans-serif;
    color: #fff;
}
.win-btn {
    width: 18px;
    height: 20px;
    margin-left: 5px;
    border-radius: 3px;
    background: linear-gradient(#666, #2c2c2c);
}
.win-btn svg {
    display: block;
}

/* Toolbars */
.bar {
    display: flex;
    flex: none;
    border-bottom: 1px solid #b5b5b5;
    background: linear-gradient(#efefef, #dadada);
}
.bar-main {
    height: 34px;
}
.group {
    display: flex;
    align-items: center;
}
.group + .group {
    border-left: 1px solid #aaa;
    box-shadow: inset 1px 0 #fff;
}
.group.grow {
    flex: 1;
}
.group.edge {
    border-right: 1px solid #bbb;
}
.grip {
    flex: none;
    width: 3px;
    height: 22px;
    margin: 0 1px 0 3px;
    background: repeating-linear-gradient(#999 0, #999 2px, transparent 2px, transparent 4px);
}
.tool {
    display: flex;
    align-items: center;
    justify-content: center;
    flex: none;
    width: 31px;
    height: 30px;
}
.tool > svg {
    width: 24px;
    height: 24px;
}
.tool.small {
    width: 24px;
    height: 24px;
}
.tool.small > svg {
    width: 18px;
    height: 18px;
}
.tool.pressed {
    border: 1px solid #666;
    border-radius: 2px;
    background: #fff;
}
.tool.fx {
    font: italic bold 14px "Liberation Serif", serif;
    color: #777;
}
.start {
    display: flex;
    align-items: center;
    width: 70px;
    padding-left: 4px;
    gap: 4px;
}
.start svg {
    width: 24px;
    height: 24px;
}
svg.tri {
    width: 5px;
    height: 3px;
}
.drop {
    display: flex;
    align-items: center;
    justify-content: center;
    width: 12px;
    height: 24px;
}
.drop.tight {
    width: 6px;
}
.more {
    display: flex;
    flex-direction: column;
    align-items: center;
    justify-content: flex-end;
    width: 14px;
    height: 26px;
    padding-bottom: 3px;
}
.more b {
    flex: 1;
    font-size: 14px;
    line-height: 8px;
}
.end {
    margin-left: auto;
}
.sep {
    flex: none;
    width: 2px;
    height: 28px;
    margin: 0 2px;
    border-left: 1px solid #b5b5b5;
    border-right: 1px solid #fff;
}
.sep.red {
    border-left-color: #d99;
}
.sep.wide {
    margin: 0 3px 0 4px;
}

/* Menu */
.menubar {
    height: 25px;
    align-items: center;
    padding: 0 4px 2px 0;
    background: #e2e2e2;
}
.menubar .grip {
    height: 16px;
}
.menu-icon {
    width: 16px;
    height: 16px;
    margin-right: 6px;
}
.menubar > button {
    margin-right: 13px;
    white-space: nowrap;
}
.menubar kbd {
    font: 10px "Liberation Mono", monospace;
}
.mdi {
    display: flex;
    gap: 3px;
    margin-left: auto;
}
.mdi button {
    width: 16px;
    height: 16px;
    border: 1px solid #666;
    border-radius: 3px;
    background: #f4f4f4;
}
.mdi .off {
    border-color: #bbb;
}
.mdi svg {
    display: block;
}
.bar-motion {
    height: 33px;
    background: linear-gradient(#dfdfdf, #d2d2d2);
}
.bar-extra {
    height: 35px;
    border-color: #888;
    background: #d0d0d0;
}
.bar-extra .group {
    background: #dadada;
}

/* Selection bar */
.bar-select {
    height: 27px;
    align-items: center;
    padding-left: 5px;
    background: linear-gradient(#cfcfcf, #dfdfdf);
}
.combo {
    position: relative;
    height: 16px;
    margin-right: 8px;
}
.combo select {
    display: block;
    appearance: none;
    width: 100%;
    height: 16px;
    padding: 0 18px 0 1px;
    border: 1px solid #666;
    border-radius: 3px;
    background: #fff;
    font: inherit;
    line-height: 14px;
    color: #000;
}
.combo::before {
    content: "";
    position: absolute;
    top: 1px;
    right: 1px;
    width: 16px;
    height: 14px;
    background: linear-gradient(#dff0ff, #5d9fe0);
    border-left: 1px solid #39c;
    pointer-events: none;
}
.combo::after {
    content: "";
    position: absolute;
    top: 5px;
    right: 4px;
    border: 5px solid transparent;
    border-top: 6px solid #111;
    border-bottom: 0;
    pointer-events: none;
}
.filter {
    width: 110px;
}
.scope {
    width: 116px;
    margin-right: 4px;
}

/* Status line */
.statusbar {
    display: flex;
    flex: none;
    align-items: center;
    height: 22px;
    background: #d9d9d9;
    border-top: 1px solid #f4f4f4;
}
.cue {
    flex: 468;
}
.statusbar strong {
    flex: 466;
    padding-left: 4px;
    border-left: 1px solid #aaa;
    font-size: 13px;
    line-height: 20px;
    white-space: nowrap;
}
.cell {
    width: 20px;
    height: 20px;
    border-left: 1px solid #aaa;
    box-shadow: inset 1px 0 #fff;
}
.cell.wide {
    width: 35px;
}
.statusbar button {
    width: 24px;
    height: 20px;
    border-left: 1px solid #aaa;
}
.statusbar button svg {
    display: block;
    width: 14px;
    height: 14px;
    margin: 0 auto;
}

/* Workspace */
.workspace {
    display: flex;
    flex: 1;
    min-height: 0;
    background: #ececec;
}
.resource {
    display: flex;
    flex-direction: column;
    flex: none;
    width: 33px;
    padding: 16px 0 3px 7px;
    background: linear-gradient(#8c8c8c, #bdbdbd);
    border-right: 1px solid #888;
}
.tab {
    display: flex;
    flex: none;
    align-items: center;
    justify-content: center;
    height: 40px;
    margin-bottom: 2px;
    border: 1px solid #666;
    border-right: 0;
    border-radius: 4px 0 0 4px;
    background: linear-gradient(90deg, #ececec, #cfcfcf);
}
.tab > svg {
    width: 24px;
    height: 26px;
}
.tab.active {
    height: 43px;
    margin: 0 -1px 1px -2px;
    background: #ececec;
}
.tab.apart {
    margin-top: 12px;
}
.tab.cut {
    height: 28px;
    align-items: flex-end;
    border-bottom-left-radius: 10px;
    overflow: hidden;
}
.tab.cut > svg {
    height: 22px;
}
.tab-scroll {
    display: flex;
    flex-direction: column;
    gap: 1px;
    width: 15px;
    margin-left: 3px;
}
.tab-scroll button {
    height: 15px;
    border: 1px solid #999;
    border-top-color: #fff;
    border-left-color: #fff;
    background: #e0e0e0;
}
.tab-scroll svg {
    display: block;
}

/* Navigator */
.navigator {
    display: flex;
    flex-direction: column;
    flex: none;
    width: 193px;
    padding: 0 9px 5px;
    background: #ececec;
    border-right: 2px solid #777;
}
.navigator h2 {
    display: flex;
    align-items: center;
    gap: 13px;
    height: 35px;
    margin: 0;
    padding: 3px 0 0 5px;
    font-size: 13px;
}
.navigator h2 svg {
    width: 12px;
    height: 12px;
}
.tree {
    flex: none;
    border: 1px solid #666;
    background: #f0f0f0;
}
.tree-head {
    display: flex;
    height: 18px;
    line-height: 16px;
    padding-left: 6px;
    border-bottom: 1px solid #999;
    background: linear-gradient(#f8f8f8, #dcdcdc);
}
.tree-head span:first-child {
    flex: 1;
}
.tree-head .next {
    width: 10px;
    padding-left: 3px;
    border-left: 1px solid #999;
    overflow: hidden;
    white-space: nowrap;
}
.tree-body {
    display: flex;
    height: 113px;
}
.tree ul {
    flex: 1;
    min-width: 0;
    margin: 0;
    padding: 0;
    list-style: none;
    background: #fff;
    overflow: hidden;
}
.tree li {
    display: flex;
    align-items: center;
    gap: 2px;
    height: 20px;
    border-bottom: 1px solid #eee;
    font: 10px "Liberation Mono", monospace;
    color: #222;
    white-space: nowrap;
}
.tree li.alt {
    background: #f8f8f8;
}
.tree li svg {
    flex: none;
    width: 16px;
    height: 16px;
}
.tree li a {
    color: #11118c;
    text-decoration: none;
}
.lv1 {
    padding-left: 23px;
}
.lv2 {
    margin-left: 47px;
    border-left: 1px dotted #999;
}
.lv2x {
    padding-left: 42px;
}
.lv3 {
    padding-left: 61px;
}
.exp {
    flex: none;
    width: 9px;
    height: 9px;
    border: 1px solid #888;
    border-radius: 2px;
    background: #fff;
    font-size: 10px;
    line-height: 6px;
}
.stub {
    width: 4px;
    border-top: 1px dotted #999;
}
.lv2 .stub {
    width: 8px;
}
.tree input {
    appearance: none;
    position: relative;
    flex: none;
    width: 13px;
    height: 13px;
    margin: 0;
    border: 1px solid #222;
    background: #fff;
}
.tree input::after {
    content: "";
    position: absolute;
    left: 3px;
    top: 0;
    width: 5px;
    height: 9px;
    border: solid #d01616;
    border-width: 0 3px 3px 0;
    transform: rotate(40deg);
}
.tree input.dim::after {
    border-color: #aaa;
    border-width: 0 2px 2px 0;
}

/* Scrollbars */
.vscroll {
    display: flex;
    flex-direction: column;
    align-items: center;
    justify-content: space-between;
    flex: none;
    width: 16px;
    padding: 7px 0;
    background: #f2f2f2;
}
.vscroll svg {
    width: 7px;
    height: 4px;
}
.thumb {
    border: 1px solid #888;
    border-radius: 2px;
    background: linear-gradient(90deg, #fafafa, #d0d0d0);
}
.vscroll .thumb {
    display: grid;
    place-items: center;
    width: 14px;
    height: 28px;
    margin-top: 11px;
}
.thumb::after {
    content: "";
    display: block;
    width: 7px;
    height: 7px;
    background: repeating-linear-gradient(#666 0, #666 1px, transparent 1px, transparent 3px);
}
.hscroll {
    display: flex;
    align-items: center;
    flex: none;
    height: 17px;
    padding: 0 23px 0 7px;
    background: #f2f2f2;
}
.hscroll svg {
    width: 4px;
    height: 7px;
}
.hscroll .thumb {
    display: grid;
    place-items: center;
    width: 19px;
    height: 15px;
    margin: 0 auto 0 8px;
    background: linear-gradient(#fafafa, #d0d0d0);
}
.hscroll .thumb::after {
    background: repeating-linear-gradient(90deg, #666 0, #666 1px, transparent 1px, transparent 3px);
}
.splitter {
    display: flex;
    align-items: center;
    flex: none;
    height: 12px;
    background: linear-gradient(transparent 6px, #bbb 6px, #bbb 7px, transparent 7px);
}
.splitter i {
    width: 30px;
    height: 6px;
    margin: 0 auto;
    border: 1px solid #bbb;
    border-bottom-color: #777;
    background: #ddd;
}
.details {
    display: flex;
    flex: 1;
    min-height: 0;
}
.panes {
    display: flex;
    flex-direction: column;
    flex: 1;
    min-width: 0;
    background: #d6d6d6;
    overflow: hidden;
}
.panes h3 {
    flex: none;
    height: 23px;
    margin: 0;
    padding-left: 6px;
    border-bottom: 1px solid #888;
    background: linear-gradient(#fafafa, #dedede);
    font-size: 13px;
    line-height: 20px;
    white-space: nowrap;
}
.preview {
    display: flex;
    align-items: center;
    flex: 1;
    margin: 4px 0 7px 6px;
    padding: 0 0 4px 79px;
    border: 1px solid #888;
    border-right: 0;
    border-bottom-color: #fff;
    background: #d3d3d3;
}
.preview p {
    margin: 0;
    white-space: nowrap;
}
.preview.mode {
    flex: none;
    height: 10px;
    margin-bottom: 0;
    background: #eee;
}
.vscroll.tall .thumb {
    height: 142px;
    margin: 0 0 77px;
}
.hscroll.long .thumb {
    width: 71px;
}

/* Graphics window */
.canvas {
    position: relative;
    flex: 1;
    min-width: 0;
    border: 1px solid #e0a562;
    background: linear-gradient(#b3b5b5, #e7e9e9 88%);
}
.model {
    display: block;
    width: 100%;
    height: 100%;
}
.axis {
    font: 11px "Liberation Sans", sans-serif;
}
.model-name {
    position: absolute;
    left: 4px;
    bottom: 2px;
    font-size: 12px;
    color: #dd9955;
}
.timer {
    position: absolute;
    top: 10px;
    right: 0;
    display: grid;
    grid-template-columns: 13px 27px 56px;
    grid-template-rows: 17px 17px;
    align-items: center;
    gap: 1px 3px;
    padding: 3px 4px 4px 0;
    border: 1px solid #999;
    background: linear-gradient(90deg, #d6d6d6, #c4c4c4);
}
.handle {
    grid-row: 1 / 3;
    align-self: stretch;
    margin: -3px 0 -4px;
    background: radial-gradient(#999 1px, transparent 1px) 1px 2px / 4px 4px, linear-gradient(90deg, #666, #111);
}
.timer label {
    padding-left: 2px;
    white-space: nowrap;
}
.timer input {
    width: 56px;
    height: 16px;
    padding: 0 3px;
    border: 1px solid #555;
    border-radius: 3px;
    background: #fff;
    font: 12px "Liberation Sans", sans-serif;
    text-align: right;
}
.timer .hot {
    background: #3a8fe8;
    color: #fff;
    font: 10px "Liberation Mono", monospace;
}

/* Bottom toolbar */
.bar-bottom {
    height: 32px;
    border: 0;
    background: linear-gradient(#ececec, #cdcdcd);
}
.watermark {
    position: absolute;
    right: 17px;
    bottom: 0;
    display: flex;
    flex-direction: column;
    align-items: center;
    color: #f01414;
    font-size: 24px;
    font-weight: 300;
    line-height: 28px;
}
```
